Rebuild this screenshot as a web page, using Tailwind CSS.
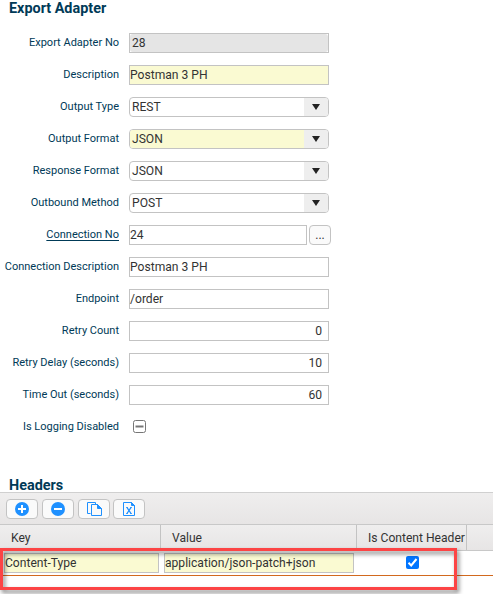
<!DOCTYPE html>
<html lang="en">
<head>
<meta charset="utf-8">
<title>Export Adapter</title>
<script src="https://cdn.jsdelivr.net/npm/@tailwindcss/browser@4"></script>
</head>
<body class="relative h-[594px] w-[493px] overflow-hidden bg-white font-[Roboto,sans-serif] text-[12.1px] leading-[18px] text-[#333]">
<h2 class="h-[27px] pl-[9px] text-[14.4px] leading-[17px] font-bold text-[#003a57]">Export Adapter</h2>
<form>
  <div class="flex h-8 items-center gap-[10px]"><label class="w-[119px] text-right text-[11px] whitespace-nowrap text-[#003a57]">Export Adapter No</label><div class="h-5 w-[200px] border border-[#c3c3c3]"><div class="h-[18px] rounded-[3px] bg-[#e5e5e5] pl-[2px]">28</div></div></div>
  <div class="flex h-8 items-center gap-[10px]"><label class="w-[119px] text-right text-[11px] whitespace-nowrap text-[#003a57]">Description</label><div class="h-5 w-[200px] border border-[#c3c3c3] bg-[#fafad2]">Postman 3 PH</div></div>
  <div class="flex h-8 items-center gap-[10px]"><label class="w-[119px] text-right text-[11px] whitespace-nowrap text-[#003a57]">Output Type</label><div class="flex h-5 w-[200px] overflow-hidden rounded-[4px] border border-[#c3c3c3]"><span class="w-[174px] pl-[2px]">REST</span><span class="flex w-6 items-center justify-center bg-[#eee]"><svg class="h-[6px] w-2" viewBox="0 0 8 6"><path d="M0 0h8L4 6z" fill="#222"/></svg></span></div></div>
  <div class="flex h-8 items-center gap-[10px]"><label class="w-[119px] text-right text-[11px] whitespace-nowrap text-[#003a57]">Output Format</label><div class="flex h-5 w-[200px] overflow-hidden rounded-[4px] border border-[#c3c3c3]"><span class="w-[174px] bg-[#fafad2] pl-[2px]">JSON</span><span class="flex w-6 items-center justify-center bg-[#eee]"><svg class="h-[6px] w-2" viewBox="0 0 8 6"><path d="M0 0h8L4 6z" fill="#222"/></svg></span></div></div>
  <div class="flex h-8 items-center gap-[10px]"><label class="w-[119px] text-right text-[11px] whitespace-nowrap text-[#003a57]">Response Format</label><div class="flex h-5 w-[200px] overflow-hidden rounded-[4px] border border-[#c3c3c3]"><span class="w-[174px] pl-[2px]">JSON</span><span class="flex w-6 items-center justify-center bg-[#eee]"><svg class="h-[6px] w-2" viewBox="0 0 8 6"><path d="M0 0h8L4 6z" fill="#222"/></svg></span></div></div>
  <div class="flex h-8 items-center gap-[10px]"><label class="w-[119px] text-right text-[11px] whitespace-nowrap text-[#003a57]">Outbound Method</label><div class="flex h-5 w-[200px] overflow-hidden rounded-[4px] border border-[#c3c3c3]"><span class="w-[174px] pl-[2px]">POST</span><span class="flex w-6 items-center justify-center bg-[#eee]"><svg class="h-[6px] w-2" viewBox="0 0 8 6"><path d="M0 0h8L4 6z" fill="#222"/></svg></span></div></div>
  <div class="flex h-8 items-center gap-[10px]"><label class="w-[119px] text-right text-[11px] whitespace-nowrap text-[#003a57] underline underline-offset-2">Connection No</label><div class="flex gap-[2px]"><div class="h-5 w-[178px] border border-[#c3c3c3]">24</div><div class="h-5 w-[22px] rounded-[4px] border border-[#c3c3c3] bg-[#fafafa] text-center text-[12px] leading-[19px]">...</div></div></div>
  <div class="flex h-8 items-center gap-[10px]"><label class="w-[119px] text-right text-[11px] whitespace-nowrap text-[#003a57]">Connection Description</label><div class="h-5 w-[200px] border border-[#c3c3c3]">Postman 3 PH</div></div>
  <div class="flex h-8 items-center gap-[10px]"><label class="w-[119px] text-right text-[11px] whitespace-nowrap text-[#003a57]">Endpoint</label><div class="h-5 w-[200px] border border-[#c3c3c3]">/order</div></div>
  <div class="flex h-8 items-center gap-[10px]"><label class="w-[119px] text-right text-[11px] whitespace-nowrap text-[#003a57]">Retry Count</label><div class="h-5 w-[200px] border border-[#c3c3c3] pr-[6px] text-right">0</div></div>
  <div class="flex h-8 items-center gap-[10px]"><label class="w-[119px] text-right text-[11px] whitespace-nowrap text-[#003a57]">Retry Delay (seconds)</label><div class="h-5 w-[200px] border border-[#c3c3c3] pr-[6px] text-right">10</div></div>
  <div class="flex h-8 items-center gap-[10px]"><label class="w-[119px] text-right text-[11px] whitespace-nowrap text-[#003a57]">Time Out (seconds)</label><div class="h-5 w-[200px] border border-[#c3c3c3] pr-[6px] text-right">60</div></div>
  <div class="flex h-8 items-center gap-[10px]"><label class="w-[119px] text-right text-[11px] whitespace-nowrap text-[#003a57]">Is Logging Disabled</label><svg class="mb-px ml-1 h-[13px] w-[13px]" viewBox="0 0 13 13"><rect x=".5" y=".5" width="12" height="12" rx="2" fill="#fff" stroke="#767676"/><path d="M2.500 6.500h8" stroke="#767676" stroke-width="2"/></svg></div>
</form>
<h2 class="mt-[34px] h-[15px] pl-[9px] text-[14.4px] leading-[17px] font-bold text-[#003a57]">Headers</h2>
<section>
  <div class="flex h-8 gap-1 border-t border-[#d0d0d0] bg-linear-to-b from-[#efeeee] to-[#e7e5e5] pt-[6px] pl-[6px]">
    <div class="flex h-5 w-8 items-center justify-center rounded-[4px] border border-[#c3c3c3] bg-[#fafafa]"><svg class="h-[14px] w-[14px]" viewBox="0 0 14 14"><circle cx="7" cy="7" r="7" fill="#1e90ff"/><path d="M3 7h8M7 3v8" stroke="#fff" stroke-width="2"/></svg></div>
    <div class="flex h-5 w-8 items-center justify-center rounded-[4px] border border-[#c3c3c3] bg-[#fafafa]"><svg class="h-[14px] w-[14px]" viewBox="0 0 14 14"><circle cx="7" cy="7" r="7" fill="#1e90ff"/><path d="M3 7h8" stroke="#fff" stroke-width="2"/></svg></div>
    <div class="flex h-5 w-8 items-center justify-center rounded-[4px] border border-[#c3c3c3] bg-[#fafafa]"><svg class="h-[14px] w-[15px]" viewBox="0 0 15 14" fill="none" stroke="#1e90ff"><path d="M3.500 11.500h-3v-11h8v1.500"/><path d="M4.500 2.500h6l4 4v7h-10z"/><path d="M10.500 2.500v4h4z" fill="#1e90ff"/></svg></div>
    <div class="-ml-px flex h-5 w-8 items-center justify-center rounded-[4px] border border-[#c3c3c3] bg-[#fafafa]"><svg class="h-[14px] w-3" viewBox="0 0 12 14" fill="none" stroke="#1e90ff"><path d="M.5.5h8l3 3v10H.5z"/><path d="M8.500.5v3h3z" fill="#1e90ff"/><path d="m4 5.500 4 6m0-6-4 6" stroke-width="1.300"/><path d="M3 5.500h2m2 0h2M3 11.500h2m2 0h2" stroke-width=".8"/></svg></div>
  </div>
  <div class="flex h-[27px] border-y border-[#c8c8c8] bg-linear-to-b from-[#efeeee] to-[#e7e5e5] leading-[26px] whitespace-nowrap">
    <div class="w-[161px] border-r border-[#c3c3c3] pl-[11px]">Key</div>
    <div class="w-[196px] border-r border-[#c3c3c3] pl-[11px]">Value</div>
    <div class="w-[110px] border-r border-[#c3c3c3] pl-[11px]">Is Content Header</div>
  </div>
  <div class="flex h-[25px] border-b border-[#d2691e] pt-[2px] pl-1">
    <div class="h-5 w-[155px] border border-[#c3c3c3] bg-[#fafad2]">Content-Type</div>
    <div class="ml-[5px] h-5 w-[190px] border border-[#c3c3c3] bg-[#fafad2]">application/json-patch+json</div>
    <svg class="mt-[3px] ml-[52px] h-[13px] w-[13px]" viewBox="0 0 13 13"><rect width="13" height="13" rx="2" fill="#0075ff"/><path d="m2.500 6.800 2.700 2.700 5.300-6.500" fill="none" stroke="#fff" stroke-width="2"/></svg>
  </div>
</section>
<div class="absolute top-[548px] left-0 h-[42px] w-[457px] border-3 border-[#fc4445] drop-shadow-[2px_3px_2px_rgba(0,0,0,0.5)]"></div>
</body>
</html>
